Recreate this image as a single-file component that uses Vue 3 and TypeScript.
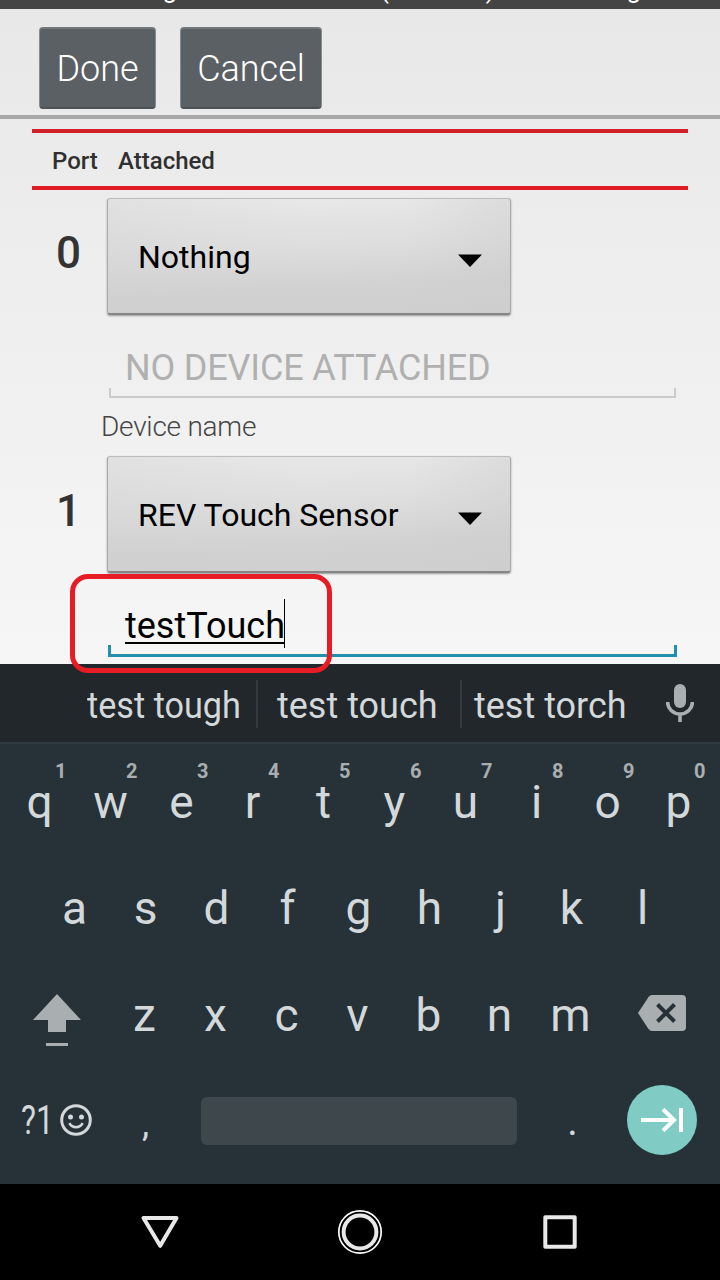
<script setup lang="ts">
interface Key { label: string; hint?: string }

const topKeys: Key[] = [...'qwertyuiop'].map((label, i) => ({ label, hint: String((i + 1) % 10) }))
const homeKeys: string[] = [...'asdfghjkl']
const lowerKeys: string[] = [...'zxcvbnm']
const suggestions: string[] = ['test tough', 'test touch', 'test torch']
const ports = [
  { port: 0, device: 'Nothing', name: 'NO DEVICE ATTACHED', active: false },
  { port: 1, device: 'REV Touch Sensor', name: 'testTouch', active: true },
]
</script>

<template>
  <div class="phone">
    <header class="titlebar">
      <span class="t-config">Active Configuration:</span>
      <span class="t-state">(unsaved)</span>
      <span class="t-name">&lt;No Config Set&gt;</span>
    </header>

    <main class="content">
      <div class="actions">
        <button class="action done">Done</button>
        <button class="action cancel">Cancel</button>
      </div>
      <div class="columns">
        <span class="col-port">Port</span>
        <span>Attached</span>
      </div>

      <section v-for="p in ports" :key="p.port" class="device">
        <div class="device-row">
          <span class="port">{{ p.port }}</span>
          <button class="spinner">
            <span>{{ p.device }}</span>
            <svg width="26" height="14" viewBox="0 0 26 14"><path d="M1 .5H25L13 13Z" fill="#000" /></svg>
          </button>
        </div>
        <div class="field" :class="{ active: p.active }">
          <span class="value">{{ p.name }}</span>
        </div>
        <div v-if="!p.active" class="caption">Device name</div>
      </section>
    </main>

    <section class="keyboard">
      <div class="suggestions">
        <div v-for="(s, i) in suggestions" :key="s" class="suggestion" :class="'s' + i"><span>{{ s }}</span></div>
        <svg class="mic" width="28" height="38" viewBox="0 0 28 38">
          <rect x="8" y="0" width="12" height="24" rx="6" fill="#a9aeb0" />
          <path d="M1.6 18a12.4 12 0 0 0 24.8 0M14 30v8" fill="none" stroke="#a9aeb0" stroke-width="3.6" />
        </svg>
      </div>
      <div class="row top">
        <span v-for="k in topKeys" :key="k.label" class="key">{{ k.label }}<small>{{ k.hint }}</small></span>
      </div>
      <div class="row home">
        <span v-for="k in homeKeys" :key="k" class="key">{{ k }}</span>
      </div>
      <div class="row lower">
        <svg class="shift" width="48" height="52" viewBox="0 0 48 52" fill="#a9aeb0">
          <path d="M24 0 48 26H33V38H15V26H0Z" /><rect x="13" y="49" width="22" height="3" />
        </svg>
        <span v-for="k in lowerKeys" :key="k" class="key">{{ k }}</span>
        <svg class="backspace" width="48" height="36" viewBox="0 0 48 36">
          <path d="M14 0H44Q48 0 48 4V32Q48 36 44 36H14Q12 36 10.500 34L0 18 10.500 2Q12 0 14 0Z" fill="#a9aeb0" />
          <path d="m19.500 9.500 17 17m0-17-17 17" stroke="#273238" stroke-width="4" />
        </svg>
      </div>
      <div class="row bottom">
        <span class="symbols">?1</span>
        <svg class="smile" width="32" height="32" viewBox="0 0 32 32">
          <circle cx="16" cy="16" r="14.300" fill="none" stroke="#d3d8da" stroke-width="3" />
          <circle cx="10.500" cy="13" r="2.500" fill="#d3d8da" /><circle cx="21.500" cy="13" r="2.500" fill="#d3d8da" />
          <path d="M9.300 19.200Q11.500 23.200 16 23.200T22.700 19.200" fill="none" stroke="#d3d8da" stroke-width="2.600" />
        </svg>
        <span class="key comma">,</span>
        <span class="space"></span>
        <span class="key period">.</span>
        <span class="enter">
          <svg width="42" height="26" viewBox="0 0 42 26" fill="none" stroke="#fff" stroke-width="4">
            <path d="M0 13H33M22 2.200 33 13 22 23.800M40 1V25" />
          </svg>
        </span>
      </div>
    </section>

    <nav class="navbar">
      <svg width="720" height="96" viewBox="0 0 720 96" fill="none" stroke="#e8e8e8" stroke-width="4" stroke-linejoin="round">
        <path d="M143.500 34H176.500L160.200 61.800Z" />
        <circle cx="360" cy="48" r="16.400" />
        <circle cx="360" cy="48" r="21.200" stroke="#fff" stroke-width="1.700" />
        <rect x="545.300" y="33.300" width="29.400" height="29.400" />
      </svg>
    </nav>
    <div class="highlight"></div>
  </div>
</template>

<style>
body { margin: 0; overflow: hidden; }
</style>

<style scoped>
.phone { position: relative; width: 720px; height: 1280px; overflow: hidden; background: #000; font-family: Roboto, sans-serif; box-sizing: border-box; }
.phone * { box-sizing: border-box; }
button { border: 0; padding: 0; font: inherit; text-align: left; }
svg { display: block; flex: none; }

.titlebar { display: flex; align-items: flex-end; height: 9px; overflow: hidden; background: #444; color: #fff; font-size: 26px; line-height: 30px; font-weight: 400; white-space: nowrap; }
.titlebar span { flex: none; margin-bottom: 5px; }
.titlebar .t-config { width: 380px; padding-left: 24px; }
.titlebar .t-state { width: 133px; }

.content { height: 655px; overflow: hidden; background: linear-gradient(#e8e8e8, #f6f6f6); }
.actions { display: flex; gap: 24px; height: 110px; padding: 18px 0 0 39px; border-bottom: 4px solid #a8a8a8; }
.action { height: 82px; padding-top: 2px; border: 1px solid #888c8f; border-top: 2px solid #74797b; border-bottom: 2px solid #4c5154; border-radius: 4px; background: #5b6064; color: #fff; font-size: 36px; font-weight: 300; text-align: center; white-space: nowrap; }
.done { width: 117px; }
.cancel { width: 142px; }
.columns { display: flex; align-items: center; height: 61px; margin: 10px 32px 0; padding: 2px 0 0 20px; border: solid #e11b24; border-width: 4px 0; border-top-color: #d32028; color: #303030; font-size: 24px; font-weight: 500; }
.col-port { width: 66px; }

.device { height: 258px; padding-top: 8px; }
.device-row { display: flex; height: 117px; }
.port { width: 107px; padding-left: 56px; color: #333; font-size: 44px; line-height: 111px; font-weight: 500; }
.spinner { display: flex; align-items: center; justify-content: space-between; width: 404px; height: 117px; padding: 2px 27px 0 30px; border: 1px solid #aaa; border-top-color: #bdbdbd; border-bottom: 2px solid #858585; border-radius: 3px; background: linear-gradient(90deg, rgba(205, 205, 205, .3), transparent 50% 75%, rgba(205, 205, 205, .4)), linear-gradient(177deg, #eaeaea, #dedede 42%, #d2d2d2 72%, #cecece); box-shadow: 0 1px 2px #999; color: #000; font-size: 32px; }
.spinner svg { margin-top: 7px; }
.field { position: relative; width: 567px; height: 83px; margin-left: 109px; color: #b0b0b0; font-size: 36px; line-height: 107px; letter-spacing: -.17px; }
.field::after { content: ''; position: absolute; right: 0; bottom: 0; left: 0; height: 8px; border: solid #cbcbcb; border-width: 0 2px 2px; }
.value { display: inline-block; margin-left: 16px; line-height: 42px; }
.field.active { width: 569px; height: 84px; margin-left: 108px; color: #000; letter-spacing: 0; }
.field.active::after { height: 9px; border: solid #238fae; border-width: 0 3px 3px; }
.active .value { position: relative; height: 46px; margin-left: 17px; }
.active .value::before { content: ''; position: absolute; right: 0; bottom: 7px; left: 0; height: 2px; background: #000; }
.active .value::after { content: ''; position: absolute; right: 0; top: -6px; width: 1px; height: 49px; background: #000; }
.caption { margin-top: 12px; padding-left: 101px; color: #444; font-size: 28px; line-height: 33px; font-weight: 300; letter-spacing: -.25px; }

.keyboard { height: 520px; background: #273238; color: #d3d8da; }
.suggestions { display: flex; align-items: center; height: 80px; border-bottom: 2px solid #303b41; background: #22272b; font-size: 36px; white-space: nowrap; }
.suggestion { flex: none; height: 48px; margin-top: 2px; line-height: 50px; padding-top: 1px; }
.s0 { width: 258px; padding-left: 87px; border-right: 2px solid #353a3e; }
.s0 span { display: inline-block; transform: scaleX(.95); transform-origin: 0 50%; }
.s1 { width: 204px; padding-left: 19px; border-right: 2px solid #353a3e; }
.s2 { width: 204px; padding-left: 12px; }
.row { display: flex; align-items: center; height: 107px; }
.key { position: relative; flex: none; width: 71px; font-size: 46px; line-height: 60px; text-align: center; }
.key small { position: absolute; top: -13px; left: 51px; color: #a9aeb0; font-size: 20px; line-height: 24px; font-weight: 700; }
.top { margin-top: 4px; padding-left: 4px; }
.home { height: 106px; padding-left: 39px; }
.lower { padding-left: 33px; }
.shift { margin-right: 28px; margin-top: 10px; }
.backspace { margin-left: 32px; margin-top: -4px; }
.bottom { height: 103px; }
.symbols { width: 60px; padding-left: 21px; font-size: 41px; white-space: nowrap; transform: scaleX(.77); transform-origin: 21px 50%; }
.comma { margin-left: 18px; font-size: 36px; margin-top: 8px; }
.space { width: 316px; height: 48px; margin-left: 20px; margin-top: 2px; border-radius: 6px; background: #3d474c; }
.period { margin-left: 20px; font-size: 40px; margin-top: 4px; }
.enter { display: flex; align-items: center; justify-content: center; width: 70px; height: 70px; margin-left: 19px; border-radius: 50%; background: #80cbc4; }
.navbar { height: 96px; background: #000; }
.highlight { position: absolute; left: 70px; top: 574px; width: 262px; height: 99px; border: 5px solid #e81c24; border-radius: 18px; }
</style>
